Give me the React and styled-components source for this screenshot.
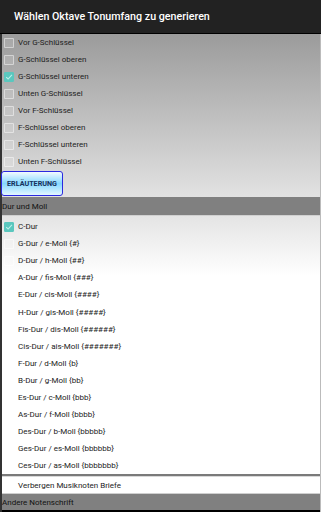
import React from 'react';
import styled, { createGlobalStyle } from 'styled-components';

const GlobalStyle = createGlobalStyle`
  html, body {
    margin: 0;
    padding: 0;
    background: #000;
  }
  body {
    font-family: Roboto, "Noto Sans", sans-serif;
  }
`;

const Screen = styled.div`
  width: 321px;
  height: 512px;
  display: flex;
  flex-direction: column;
  background: #000;
  overflow: hidden;
`;

const Header = styled.div`
  height: 33px;
  flex: none;
  background: #222;
  border-bottom: 1px solid #000;
  display: flex;
  align-items: center;
  padding-left: 14px;
  color: #fff;
  font-size: 10.7px;
  font-weight: 500;
`;

const Body = styled.div`
  flex: 1;
  display: flex;
  flex-direction: column;
  border-left: 2px solid #333;
  border-right: 1px solid #bbb;
  min-height: 0;
`;

const TopPanel = styled.div`
  background: linear-gradient(#9b9b9b, #e2e2e2);
  display: flex;
  flex-direction: column;
  padding-bottom: 1px;
`;

const Row = styled.div`
  height: ${p => p.$h || 17}px;
  display: flex;
  align-items: center;
  gap: 4px;
  padding-left: ${p => p.$pad ?? 2}px;
  font-size: 8px;
  color: #222;
`;

const Box = styled.div`
  width: 8px;
  height: 8px;
  flex: none;
  border-radius: 1px;
  display: flex;
  align-items: center;
  justify-content: center;
  background: ${p => (p.$checked ? '#5ac7be' : 'rgba(255,255,255,0.12)')};
  border: 1px solid ${p => (p.$checked ? '#5ac7be' : 'rgba(255,255,255,0.45)')};
  visibility: ${p => (p.$hidden ? 'hidden' : 'visible')};
`;

const Button = styled.button`
  width: 62px;
  height: 25px;
  margin-left: -1px;
  border: 1px solid #2a2ae0;
  border-radius: 3px;
  background: linear-gradient(#f2fbff, #86d8ff 50%, #e4f7ff);
  color: #17305a;
  font-family: Roboto, sans-serif;
  font-size: 7.2px;
  font-weight: 700;
  padding: 0;
  cursor: pointer;
`;

const SectionHead = styled.div`
  height: ${p => p.$h || 18}px;
  flex: none;
  background: #808080;
  display: flex;
  align-items: center;
  font-size: 8px;
  color: #111;
`;

const List = styled.div`
  background: linear-gradient(#e4e4e4, #ffffff 60px);
  display: flex;
  flex-direction: column;
  padding-top: 2px;
  border-top: 1px solid #d0d0d0;
`;

const Divider = styled.div`
  height: 2px;
  background: #7a7a7a;
  border-bottom: 1px solid #d8d8d8;
`;

const WhiteRow = styled.div`
  height: 16px;
  background: #fff;
  display: flex;
  align-items: center;
  padding-left: 16px;
  font-size: 8px;
  color: #222;
  border-bottom: 1px solid #cfcfcf;
`;

const Check = () => (
  <svg width="8" height="8" viewBox="0 0 8 8">
    <path d="M1.2 4.2 L3.1 6 L6.9 1.8" fill="none" stroke="#bff0ea" strokeWidth="1.1" />
  </svg>
);

const clefs = [
  ['Vor G-Schlüssel', false],
  ['G-Schlüssel oberen', false],
  ['G-Schlüssel unteren', true],
  ['Unten G-Schlüssel', false],
  ['Vor F-Schlüssel', false],
  ['F-Schlüssel oberen', false],
  ['F-Schlüssel unteren', false],
  ['Unten F-Schlüssel', false],
];

const keys = [
  'C-Dur',
  'G-Dur / e-Moll {#}',
  'D-Dur / h-Moll {##}',
  'A-Dur / fis-Moll {###}',
  'E-Dur / cis-Moll {####}',
  'H-Dur / gis-Moll {#####}',
  'Fis-Dur / dis-Moll {######}',
  'Cis-Dur / ais-Moll {#######}',
  'F-Dur / d-Moll {b}',
  'B-Dur / g-Moll {bb}',
  'Es-Dur / c-Moll {bbb}',
  'As-Dur / f-Moll {bbbb}',
  'Des-Dur / b-Moll {bbbbb}',
  'Ges-Dur / es-Moll {bbbbbb}',
  'Ces-Dur / as-Moll {bbbbbbb}',
];

export default function App() {
  return (
    <Screen>
      <GlobalStyle />
      <Header>Wählen Oktave Tonumfang zu generieren</Header>
      <Body>
        <TopPanel>
          {clefs.map(([label, checked]) => (
            <Row key={label}>
              <Box $checked={checked}>{checked && <Check />}</Box>
              {label}
            </Row>
          ))}
          <Row $h={26} $pad={0}>
            <Button>ERLÄUTERUNG</Button>
          </Row>
        </TopPanel>
        <SectionHead>Dur und Moll</SectionHead>
        <List>
          {keys.map((label, i) => (
            <Row key={label} $h={17.1}>
              <Box $checked={i === 0} $hidden={i > 2}>{i === 0 && <Check />}</Box>
              {label}
            </Row>
          ))}
        </List>
        <Divider />
        <WhiteRow>Verbergen Musiknoten Briefe</WhiteRow>
        <SectionHead $h={16}>Andere Notenschrift</SectionHead>
      </Body>
    </Screen>
  );
}
